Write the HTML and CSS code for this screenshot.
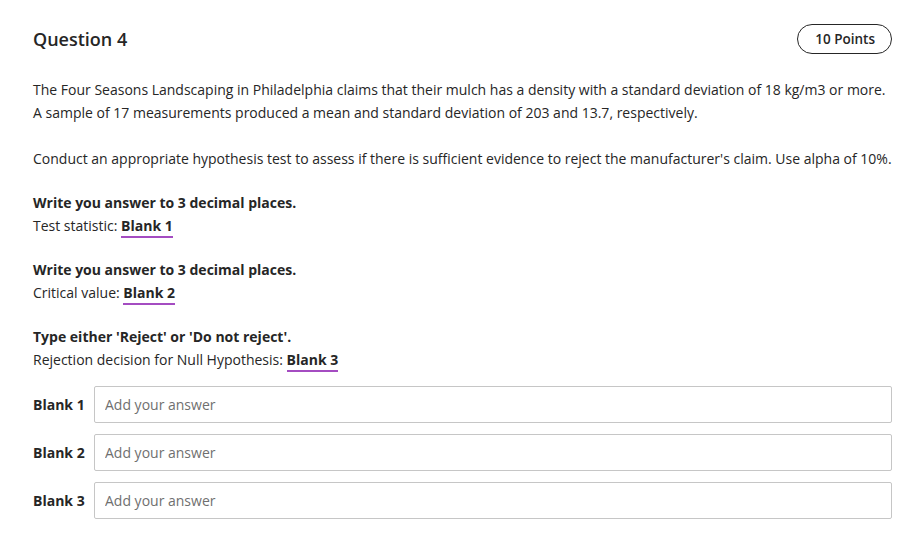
FILE: index.html
```html
<!DOCTYPE html>
<html>
<head>
<meta charset="utf-8">
<link rel="stylesheet" href="styles.css">
</head>
<body>
<div class="question">
  <div class="header">
    <h2 class="title">Question 4</h2>
    <span class="points">10 Points</span>
  </div>
  <p class="para first">The Four Seasons Landscaping in Philadelphia claims that their mulch has a density with a standard deviation of 18 kg/m3 or more.<br>A sample of 17 measurements produced a mean and standard deviation of 203 and 13.7, respectively.</p>
  <p class="para gap23">Conduct an appropriate hypothesis test to assess if there is sufficient evidence to reject the manufacturer's claim. Use alpha of 10%.</p>
  <p class="para gap21"><strong>Write you answer to 3 decimal places.</strong><br>Test statistic: <span class="blank">Blank 1</span></p>
  <p class="para gap21"><strong>Write you answer to 3 decimal places.</strong><br>Critical value: <span class="blank">Blank 2</span></p>
  <p class="para gap21"><strong>Type either 'Reject' or 'Do not reject'.</strong><br>Rejection decision for Null Hypothesis: <span class="blank">Blank 3</span></p>
  <div class="answers">
    <div class="answer-row"><label class="answer-label">Blank 1</label><input class="answer-input" type="text" placeholder="Add your answer"></div>
    <div class="answer-row"><label class="answer-label">Blank 2</label><input class="answer-input" type="text" placeholder="Add your answer"></div>
    <div class="answer-row"><label class="answer-label">Blank 3</label><input class="answer-input" type="text" placeholder="Add your answer"></div>
  </div>
</div>
</body>
</html>
```

FILE: styles.css
```css
html, body {
  margin: 0;
  padding: 0;
  background: #ffffff;
}
body {
  font-family: "Open Sans", "Liberation Sans", sans-serif;
  color: #262626;
  font-size: 14px;
}
.question {
  padding: 24px 25px 0 33px;
}
.header {
  display: flex;
  justify-content: space-between;
  align-items: center;
  height: 30px;
}
.title {
  margin: 0;
  font-size: 18px;
  font-weight: 600;
  line-height: 30px;
}
.points {
  box-sizing: border-box;
  height: 30px;
  padding: 0 16px 0 17px;
  border: 1px solid #262626;
  border-radius: 15px;
  font-size: 13.5px;
  font-weight: 600;
  line-height: 28px;
}
.para {
  margin: 0 -20px 0 0;
  line-height: 23px;
}
.first { margin-top: 23.5px; }
.gap23 { margin-top: 23px; }
.gap21 { margin-top: 21px; }
.para strong { font-weight: 700; }
.blank {
  font-weight: 700;
  padding-bottom: 1px;
  border-bottom: 2px solid #a44cc1;
}
.answers {
  margin-top: 15.5px;
  display: flex;
  flex-direction: column;
  gap: 11px;
}
.answer-row {
  display: flex;
  align-items: center;
}
.answer-label {
  width: 61px;
  font-weight: 700;
  font-size: 14px;
}
.answer-input {
  flex: 1;
  box-sizing: border-box;
  height: 37px;
  margin: 0;
  padding: 0 10px;
  border: 1px solid #c6c6c6;
  border-radius: 2px;
  font-family: "Open Sans", "Liberation Sans", sans-serif;
  font-size: 14px;
  color: #262626;
  background: #fff;
  outline: none;
}
.answer-input::placeholder {
  color: #6f6f6f;
}
```
